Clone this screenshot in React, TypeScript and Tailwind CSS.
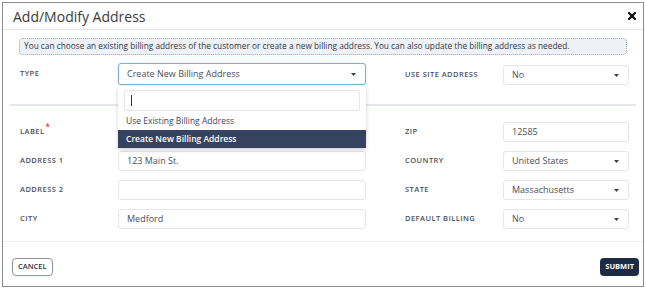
import { X } from "lucide-react";

const font = { fontFamily: '"Open Sans", "Liberation Sans", sans-serif' };

function Caret() {
  return (
    <svg width="5" height="3" viewBox="0 0 5 3" className="shrink-0">
      <path d="M0 0H5L2.5 3Z" fill="#3a3f4b" />
    </svg>
  );
}

function Label({ text, required }: { text: string; required?: boolean }) {
  return (
    <div className="w-[98px] shrink-0 text-[7.5px] font-semibold tracking-[0.45px] text-[#4a5060]">
      {text}
      {required && <sup className="ml-[1px] text-[8px] text-[#e0353b]">*</sup>}
    </div>
  );
}

function Field({
  value,
  wide,
  select,
}: {
  value?: string;
  wide?: boolean;
  select?: boolean;
}) {
  return (
    <div
      className={`flex h-[20px] shrink-0 items-center justify-between rounded-[3px] border border-[#e4e6ea] bg-white pl-[8px] pr-[9px] text-[9px] text-[#4b4f58] ${
        wide ? "w-[248px]" : "w-[126px]"
      }`}
    >
      <span>{value}</span>
      {select && <Caret />}
    </div>
  );
}

function Row({
  left,
  right,
}: {
  left: React.ReactNode;
  right: React.ReactNode;
}) {
  return (
    <div className="flex items-center pl-[10px]">
      <div className="flex items-center">{left}</div>
      <div className="ml-[39px] flex items-center">{right}</div>
    </div>
  );
}

export default function App() {
  return (
    <div className="h-[290px] w-[646px] bg-white pl-[2px] pt-[2px]" style={font}>
      <div className="flex h-[285px] w-[642px] flex-col border border-[#8c8c8c]">
        <div className="flex h-[27px] shrink-0 items-center justify-between border-b border-[#e6e6e6] pl-[10px] pr-[5px]">
          <span className="text-[14px] text-[#3a3a3a]">Add/Modify Address</span>
          <X size={12} strokeWidth={4.5} color="#111" />
        </div>

        <div className="relative flex flex-col px-[7px]">
          <div className="mx-[9px] mt-[8px] flex h-[17px] items-center rounded-[4px] border border-dotted border-[#9ea4ac] bg-[#eef2f7] px-[4px] text-[8.3px] text-[#2f3542]">
            You can choose an existing billing address of the customer or create a new billing address. You can also update the billing address as needed.
          </div>

          <div className="mt-[8px] flex items-center pl-[10px]">
            <Label text="TYPE" />
            <div className="flex h-[22px] w-[248px] items-center justify-between rounded-[3px] border border-[#7fb0cc] bg-white pl-[8px] pr-[9px] text-[9px] text-[#4b4f58] shadow-[0_0_2px_rgba(80,150,190,0.35)]">
              <span>Create New Billing Address</span>
              <Caret />
            </div>
            <div className="ml-[39px] flex items-center pt-[2px]">
              <Label text="USE SITE ADDRESS" />
              <Field value="No" select />
            </div>
          </div>

          <div className="mt-[19px] h-[2px] bg-[#e4e7eb]" />

          <div className="mt-[16px] flex flex-col gap-[9px]">
            <Row
              left={
                <>
                  <Label text="LABEL" required />
                  <Field wide />
                </>
              }
              right={
                <>
                  <Label text="ZIP" />
                  <Field value="12585" />
                </>
              }
            />
            <Row
              left={
                <>
                  <Label text="ADDRESS 1" />
                  <Field value="123 Main St." wide />
                </>
              }
              right={
                <>
                  <Label text="COUNTRY" />
                  <Field value="United States" select />
                </>
              }
            />
            <Row
              left={
                <>
                  <Label text="ADDRESS 2" />
                  <Field wide />
                </>
              }
              right={
                <>
                  <Label text="STATE" />
                  <Field value="Massachusetts" select />
                </>
              }
            />
            <Row
              left={
                <>
                  <Label text="CITY" />
                  <Field value="Medford" wide />
                </>
              }
              right={
                <>
                  <Label text="DEFAULT BILLING" />
                  <Field value="No" select />
                </>
              }
            />
          </div>

          <div className="absolute left-[115px] top-[56px] w-[248px] rounded-b-[3px] bg-white shadow-[0_2px_4px_rgba(0,0,0,0.18)]">
            <div className="mx-[6px] mt-[4px] flex h-[21px] items-center rounded-[3px] border border-[#e4e6ea] pl-[6px]">
              <div className="h-[11px] w-[1px] bg-[#333]" />
            </div>
            <div className="flex h-[19px] items-center pl-[8px] pt-[1px] text-[8.5px] text-[#3f4656]">
              Use Existing Billing Address
            </div>
            <div className="flex h-[18px] items-center bg-[#354260] pl-[8px] text-[8.5px] font-semibold text-white">
              Create New Billing Address
            </div>
          </div>
        </div>

        <div className="mt-[12px] h-[1px] bg-[#f0f0f0]" />

        <div className="flex items-center justify-between pl-[9px] pr-[4px] pt-[16px]">
          <div className="flex h-[18px] items-center rounded-[4px] border border-[#8f96a3] px-[5px] text-[7.5px] font-semibold text-[#2f3542] shadow-[0_0_1px_rgba(0,0,0,0.2)]">
            CANCEL
          </div>
          <div className="flex h-[18px] items-center rounded-[4px] bg-[#1f2a44] px-[5px] text-[7.5px] font-bold text-white">
            SUBMIT
          </div>
        </div>
      </div>
    </div>
  );
}
